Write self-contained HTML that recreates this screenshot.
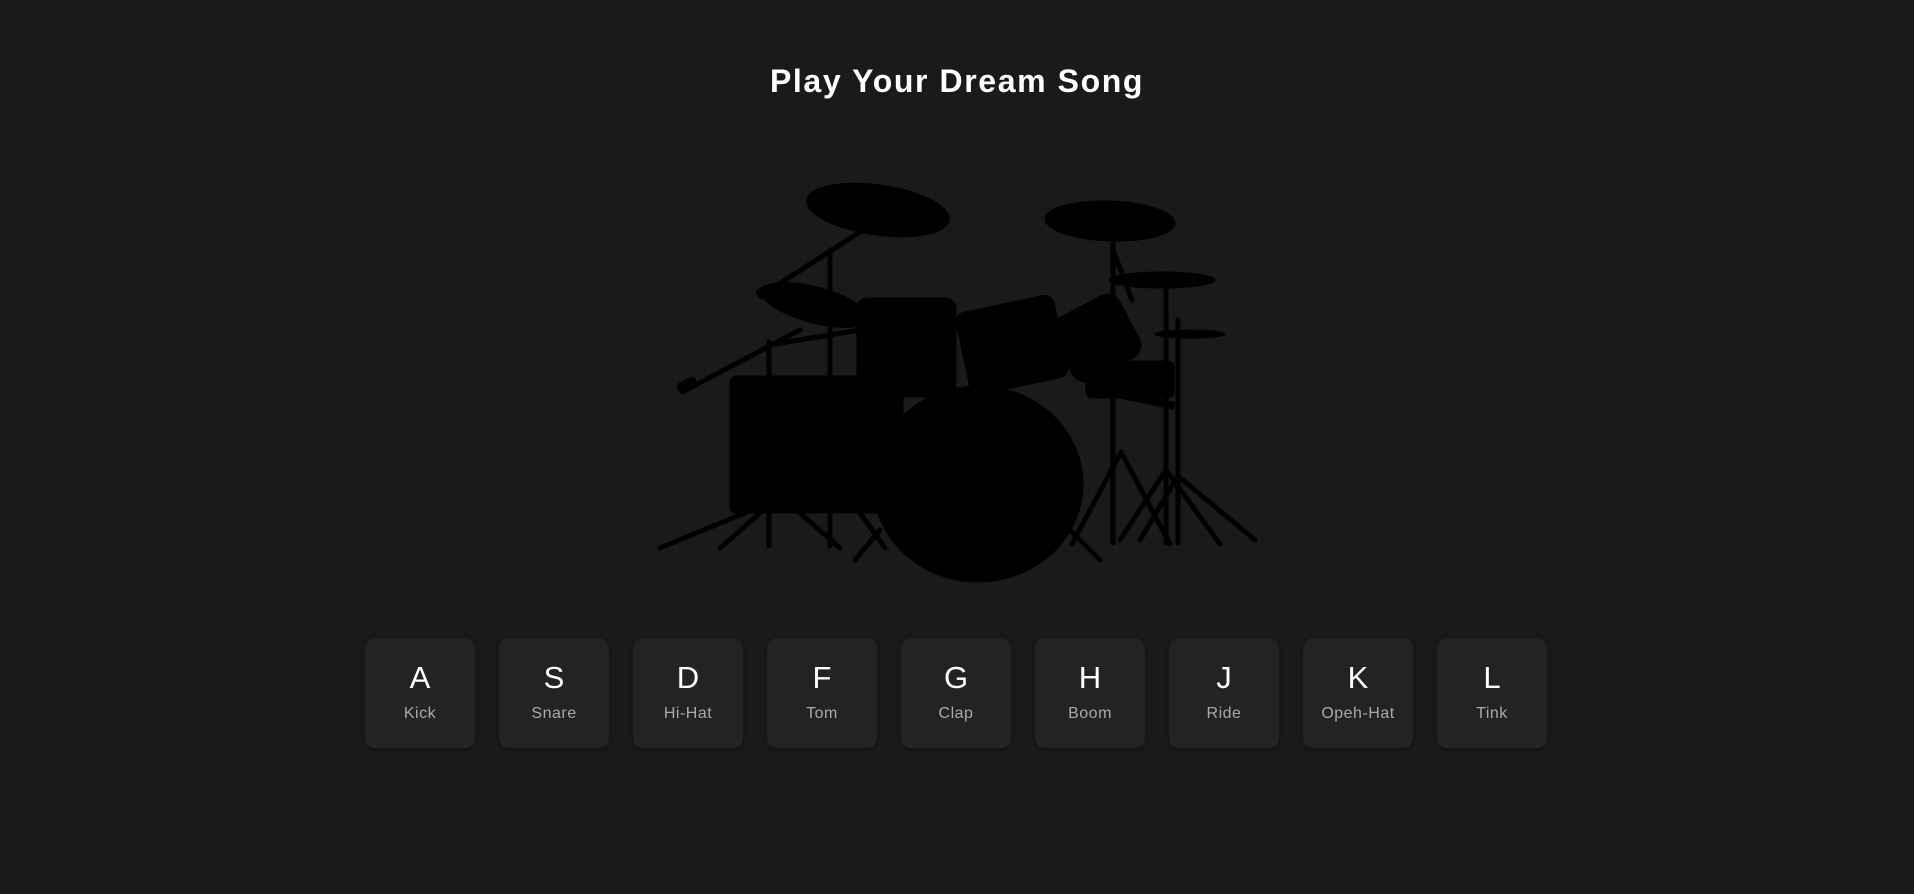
<!DOCTYPE html>
<html><head><meta charset="utf-8"><style>
html,body{margin:0;padding:0;background:#1a1a1a;width:1914px;height:894px;overflow:hidden;font-family:"Liberation Sans",sans-serif}
h1{position:absolute;left:0;width:1914px;top:62px;margin:0;text-align:center;color:#fff;font-size:32px;font-weight:bold;letter-spacing:1.6px;line-height:38px}
.keys{position:absolute;left:365px;top:638px;display:flex;gap:24px}
.key{width:110px;height:110px;border-radius:10px;background:#232323;box-shadow:0 2px 6px rgba(0,0,0,.35);text-align:center;color:#fff}
.key b{display:block;font-weight:normal;font-size:31px;line-height:31px;margin-top:24px}
.key span{display:block;font-size:16px;color:#aaa;margin-top:12px;letter-spacing:.5px}
svg{position:absolute;left:0;top:0}
</style></head><body>
<h1>Play Your Dream Song</h1>
<svg width="1914" height="894" viewBox="0 0 1914 894" fill="#000" stroke="#000">
<g stroke-width="5" fill="none" stroke-linecap="round">
<line x1="830" y1="250" x2="830" y2="546"/>
<line x1="860" y1="232" x2="765" y2="293"/>
<line x1="769" y1="342" x2="769" y2="546"/>
<line x1="800" y1="330" x2="690" y2="388"/>
<line x1="860" y1="330" x2="769" y2="345"/>
<line x1="1113" y1="244" x2="1113" y2="543"/>
<line x1="1113" y1="250" x2="1132" y2="300"/>
<line x1="1166" y1="290" x2="1166" y2="543"/>
<line x1="1178" y1="320" x2="1178" y2="543"/>
<line x1="1121" y1="452" x2="1072" y2="544"/><line x1="1121" y1="452" x2="1170" y2="544"/>
<line x1="1166" y1="470" x2="1120" y2="540"/><line x1="1166" y1="470" x2="1220" y2="544"/>
<line x1="1178" y1="476" x2="1255" y2="540"/><line x1="1178" y1="476" x2="1140" y2="540"/>
<line x1="745" y1="513" x2="660" y2="548"/><line x1="760" y1="513" x2="720" y2="548"/>
<line x1="800" y1="513" x2="840" y2="548"/><line x1="860" y1="513" x2="885" y2="548"/>
<line x1="880" y1="530" x2="855" y2="560"/><line x1="1070" y1="530" x2="1100" y2="560"/>
</g>
<ellipse cx="878" cy="210" rx="72" ry="25" transform="rotate(8 878 210)"/>
<ellipse cx="1110" cy="221" rx="65" ry="20" transform="rotate(2 1110 221)"/>
<ellipse cx="1162" cy="280" rx="53" ry="8"/>
<ellipse cx="1190" cy="334" rx="35" ry="4"/>
<ellipse cx="815" cy="305" rx="55" ry="18" transform="rotate(15 815 305)"/>
<rect x="677" y="380" width="20" height="11" rx="4" transform="rotate(-28 687 385)"/>
<rect x="757" y="287" width="14" height="10" rx="3" transform="rotate(-30 764 292)"/>
<rect x="857" y="298" width="99" height="99" rx="10"/>
<rect x="730" y="376" width="173" height="137" rx="6"/>
<rect x="962" y="303" width="100" height="84" rx="10" transform="rotate(-12 1012 345)"/>
<rect x="1058" y="303" width="76" height="70" rx="14" transform="rotate(-28 1096 338)"/>
<rect x="1086" y="361" width="88" height="37" rx="6"/>
<rect x="1085" y="393" width="90" height="7" transform="rotate(12 1130 396)"/>
<ellipse cx="978" cy="484" rx="105" ry="98"/>
</svg>
<div class="keys">
<div class="key"><b>A</b><span>Kick</span></div>
<div class="key"><b>S</b><span>Snare</span></div>
<div class="key"><b>D</b><span>Hi-Hat</span></div>
<div class="key"><b>F</b><span>Tom</span></div>
<div class="key"><b>G</b><span>Clap</span></div>
<div class="key"><b>H</b><span>Boom</span></div>
<div class="key"><b>J</b><span>Ride</span></div>
<div class="key"><b>K</b><span>Opeh-Hat</span></div>
<div class="key"><b>L</b><span>Tink</span></div>
</div>
</body></html>
